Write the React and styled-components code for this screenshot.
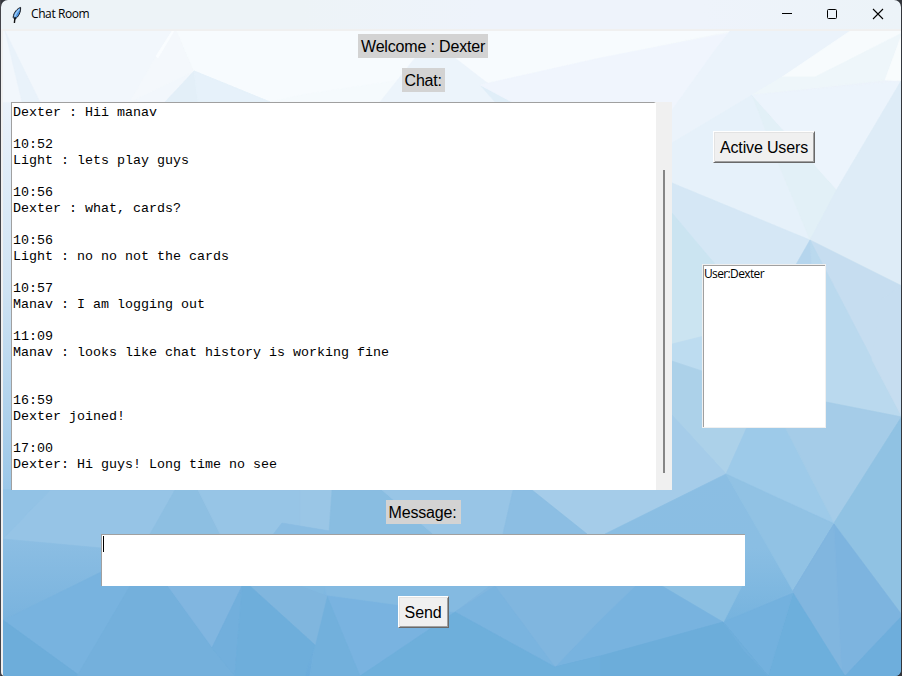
import React from 'react';
import styled, { createGlobalStyle } from 'styled-components';

const GlobalStyle = createGlobalStyle`
  * { box-sizing: border-box; }
  body { margin: 0; overflow: hidden; background: #303640; }
`;

const Window = styled.div`
  width: 902px;
  height: 676px;
  padding: 0 1px 0 1px;
  display: flex;
  flex-direction: column;
  background: linear-gradient(to right, #43444a 0 1px, #33363c 1px);
  color: #000;
`;

const TitleBar = styled.header`
  flex: 0 0 31px;
  display: flex;
  align-items: center;
  padding-left: 10px;
  border-radius: 7px 7px 0 0;
  border-bottom: 2px solid #f0f0f0;
  background: linear-gradient(to right, #edf3f7 0, #edf3f7 300px, #eef3fb 480px, #eef3fb 700px, #ecf3f8 100%);
`;

const Title = styled.h1`
  flex: 1;
  margin: 0;
  padding: 0 0 1px 8px;
  font: 400 12px/16px "Open Sans", "Noto Sans", sans-serif;
  letter-spacing: -0.4px;
`;

const WindowButton = styled.button`
  width: 46px;
  height: 28px;
  padding: 0 0 2px;
  border: 0;
  background: none;
  display: flex;
  align-items: center;
  justify-content: center;
`;

const Client = styled.main`
  position: relative;
  isolation: isolate;
  flex: 1;
  display: flex;
  flex-direction: column;
  padding-top: 3px;
  border-left: 2px solid #f0f0f0;
  border-radius: 0 0 6px 4px;
  overflow: hidden;
`;

const Backdrop = styled.svg`
  position: absolute;
  inset: 0;
  z-index: -1;
`;

const CenterStack = styled.section`
  width: 840px;
  display: flex;
  flex-direction: column;
  align-items: center;
  gap: 10px;
`;

const Caption = styled.label`
  width: ${(p) => p.$width}px;
  height: 24px;
  padding-left: 3px;
  background: #d3d3d3;
  font: 16px/25px "Liberation Sans", Arial, sans-serif;
  letter-spacing: -0.17px;
  white-space: pre;
`;

const MiddleRow = styled.section`
  display: flex;
  margin: 10px 0;
  padding-left: 8px;
`;

const ChatPane = styled.div`
  display: flex;
  width: 661px;
  height: 388px;
`;

const Transcript = styled.pre`
  flex: 1;
  margin: 0;
  padding: 2px 1px;
  overflow: hidden;
  background: #fff;
  border-top: 1px solid #a0a0a0;
  border-left: 1px solid #a0a0a0;
  border-right: 2px solid #fff;
  font: 13.333px/16px "Liberation Mono", "Courier New", monospace;
`;

const ScrollTrack = styled.div`
  width: 16px;
  padding: 68px 0 0 7px;
  background: #f0f0f0;
`;

const ScrollThumb = styled.div`
  width: 2px;
  height: 303px;
  background: #868686;
`;

const Sidebar = styled.aside`
  display: flex;
  flex-direction: column;
  align-items: center;
  width: 124px;
  margin-left: 30px;
  padding-top: 29px;
`;

const RaisedButton = styled.button`
  width: ${(p) => p.$width}px;
  height: 32px;
  padding: 1px 0 0;
  border: 1px solid;
  border-color: #fff #696969 #696969 #fff;
  box-shadow: inset 1px 1px #e3e3e3, inset -1px -1px #a0a0a0;
  background: #f0f0f0;
  color: #000;
  font: 16px/29px "Liberation Sans", Arial, sans-serif;
  letter-spacing: -0.15px;
`;

const UserList = styled.ul`
  width: 124px;
  height: 164px;
  margin: 101px 0 0;
  padding: 0;
  list-style: none;
  background: #fff;
  border: 1px solid #f0f0f0;
  box-shadow: inset 1px 1px #a0a0a0;
`;

const UserItem = styled.li`
  padding: 0 1px;
  font: 12px/17px "Open Sans", "Noto Sans", sans-serif;
  letter-spacing: -0.63px;
`;

const MessageBox = styled.div`
  width: 644px;
  height: 52px;
  padding: 1px;
  background: #fff;
  border-top: 1px solid #a0a0a0;
  border-left: 1px solid #a0a0a0;
`;

const Caret = styled.div`
  width: 1px;
  height: 16px;
  background: #000;
`;

const facets = [
  ['3,31 177,31 194,71 165,102 3,102', '#f2f7fc'],
  ['5,31 40,102 22,102', '#e9f2fa'],
  ['172,31 177,31 194,71 130,102 155,58', '#f4f8fc'],
  ['172,31 174,31 158,58 156,56', '#fafdff'],
  ['177,31 730,31 600,58 480,85 300,102 270,102 194,71', '#f7fbfe'],
  ['194,71 165,102 270,102', '#e3eff8'],
  ['194,71 198,102 270,102', '#e6f1fa'],
  ['270,102 300,95 400,80 480,85 512,102', '#f5fafd'],
  ['415,58 455,58 512,102 380,102', '#ecf4fb'],
  ['480,85 512,102 495,102', '#e0eef8'],
  ['480,85 600,58 730,33 720,45 672,143 640,102 512,102', '#f0f5fd'],
  ['730,31 852,31 782,77 752,96 672,143 672,110 715,50', '#ebf3fb'],
  ['850,31 902,31 902,33 815,77 782,77', '#f7fbfd'],
  ['902,33 885,80 752,95 782,77 815,77', '#eef6fa'],
  ['902,34 902,81 885,80', '#f8fcfd'],
  ['752,95 672,143 672,183 810,240 837,189', '#e6f1fa'],
  ['752,95 837,190 810,240 779,165', '#e2f0f7'],
  ['752,95 901,81 837,190', '#ecf4fc'],
  ['901,81 902,286 810,240 837,189', '#deecf7'],
  ['672,183 810,240 795,275 714,275 672,213', '#d5e7f5'],
  ['672,213 720,270 720,332 672,344', '#cbe4f1'],
  ['672,344 720,332 720,376 672,361', '#bddcf0'],
  ['810,240 826,272 826,300 790,275', '#b5d5ed'],
  ['810,240 902,286 902,417', '#c6ddf0'],
  ['810,240 902,417 820,401', '#bad9ee'],
  ['872,360 902,417 902,286 880,300', '#c6ddf0'],
  ['672,361 702,371 747,427 726,474 672,415', '#acd1e9'],
  ['672,415 726,474 605,534 587,534 532,490 672,480', '#a5cce9'],
  ['747,427 785,425 834,523 726,474', '#9dcae9'],
  ['785,427 800,400 826,402 902,417 834,523', '#a5cce8'],
  ['902,416 902,616 834,523', '#90c2e3'],
  ['726,474 605,534 605,586 662,586 723,622 793,591', 'url(#deep)'],
  ['726,474 834,524 793,591', '#91c2e4'],
  ['834,524 793,591 845,676 902,615', '#7db4df'],
  ['834,524 793,591 842,676', '#81b6df'],
  ['845,676 902,616 902,676', '#6eaedc'],
  ['793,593 845,676 768,676', '#6dafdc'],
  ['793,593 723,622 768,676', '#73b1de'],
  ['662,586 723,623 745,580', '#8bbfe2'],
  ['600,620 635,586 662,586 723,622 600,656 555,667', '#78b3df'],
  ['555,667 600,656 723,622 768,676 530,676', '#6cadda'],
  ['723,622 768,676 745,652', '#70afdc'],
  ['280,490 332,490 329,531 282,523', '#9ac6e6'],
  ['332,490 382,490 433,534 329,534', '#89bde1'],
  ['382,490 513,490 503,534 433,534', '#98c5e6'],
  ['513,490 532,490 587,534 503,534', '#8cbee3'],
  ['325,586 490,586 455,612 400,605 327,595', '#84bae1'],
  ['300,586 325,586 315,645 300,632', '#82b9e0'],
  ['327,596 400,606 448,625 360,676 310,676 315,645', '#79b3e0'],
  ['327,596 360,676 310,676 315,645', '#72b0dc'],
  ['490,586 635,586 600,620 555,667 455,612', '#80b6df'],
  ['495,586 555,667 455,612', '#7ab4df'],
  ['455,612 555,667 600,656 600,676 360,676', '#6eafdb'],
  ['3,490 175,490 150,540 101,548 3,539', '#96c4e6'],
  ['3,490 50,490 3,539', '#92c2e5'],
  ['175,490 198,490 220,534 150,534', '#8dbfe2'],
  ['198,490 300,490 300,526 282,523 273,534 220,534', '#97c5e6'],
  ['282,523 330,531 330,536 272,536', '#89bce2'],
  ['3,539 101,548 101,575 12,617 3,620', 'url(#left)'],
  ['101,572 130,586 80,676 3,620 20,612', '#78b3df'],
  ['3,620 80,676 3,676', '#6dadda'],
  ['130,586 168,586 212,648 235,676 77,676', '#74b0dc'],
  ['168,586 242,586 212,647', '#81b6e0'],
  ['242,586 212,648 235,676', '#72afdc'],
  ['250,586 300,586 327,596 315,645', '#80b6de'],
  ['242,586 250,586 315,645 305,676 235,676', '#6eaedb'],
];

function Polygons() {
  return (
    <Backdrop width="898" height="645" viewBox="3 31 898 645" aria-hidden="true">
      <defs>
        <linearGradient id="sky" x1="0" y1="0" x2="0" y2="1">
          <stop offset="0" stopColor="#f4f8fc" />
          <stop offset="0.12" stopColor="#e9f1fa" />
          <stop offset="0.4" stopColor="#cfe3f3" />
          <stop offset="0.71" stopColor="#9bc7e8" />
          <stop offset="1" stopColor="#6aabdb" />
        </linearGradient>
        <linearGradient id="deep" x1="0" y1="0" x2="0" y2="1">
          <stop offset="0" stopColor="#8bbee3" />
          <stop offset="0.5" stopColor="#8abee3" />
          <stop offset="1" stopColor="#76b3de" />
        </linearGradient>
        <linearGradient id="left" x1="0" y1="0" x2="0" y2="1">
          <stop offset="0" stopColor="#8cbee3" />
          <stop offset="1" stopColor="#79b3de" />
        </linearGradient>
      </defs>
      <rect x="3" y="31" width="898" height="645" fill="url(#sky)" />
      {facets.map(([points, fill]) => (
        <polygon key={points} points={points} fill={fill} stroke={fill} strokeWidth="0.6" />
      ))}
    </Backdrop>
  );
}

function Feather() {
  return (
    <svg width="12" height="18" viewBox="0 0 12 18" aria-hidden="true">
      <path d="M9.6 1.4C6.8 2.2 2.4 6.2 2.2 11.4l1.6 1.8C7.6 11 9.9 6 9.6 1.4Z" fill="#4b92e0" stroke="#17191e" strokeWidth="1" />
      <path d="M8.4 3.2C6 5.4 4.2 8 3.6 11" fill="none" stroke="#9ccbf5" strokeWidth="1.4" />
      <path d="M4.2 11C3.8 13 3.6 14 3.4 17" fill="none" stroke="#111" strokeWidth="1.4" />
    </svg>
  );
}

const log = `Dexter : Hii manav

10:52
Light : lets play guys

10:56
Dexter : what, cards?

10:56
Light : no no not the cards

10:57
Manav : I am logging out

11:09
Manav : looks like chat history is working fine


16:59
Dexter joined!

17:00
Dexter: Hi guys! Long time no see
`;

const users = ['User:Dexter'];

export default function App() {
  return (
    <>
      <GlobalStyle />
      <Window>
        <TitleBar>
          <Feather />
          <Title>Chat Room</Title>
          <WindowButton aria-label="Minimize">
            <svg width="12" height="12" viewBox="0 0 12 12"><path d="M2 5.5h10" stroke="#000" /></svg>
          </WindowButton>
          <WindowButton aria-label="Maximize">
            <svg width="12" height="12" viewBox="0 0 12 12"><rect x="1.5" y="1.5" width="9" height="9" rx="1" fill="none" stroke="#000" /></svg>
          </WindowButton>
          <WindowButton aria-label="Close">
            <svg width="12" height="12" viewBox="0 0 12 12"><path d="M1 1l10 10M11 1L1 11" stroke="#000" strokeWidth="1.1" /></svg>
          </WindowButton>
        </TitleBar>
        <Client>
          <Polygons />
          <CenterStack>
            <Caption $width={130}>Welcome : Dexter</Caption>
            <Caption $width={43}>Chat:</Caption>
          </CenterStack>
          <MiddleRow>
            <ChatPane>
              <Transcript>{log}</Transcript>
              <ScrollTrack><ScrollThumb /></ScrollTrack>
            </ChatPane>
            <Sidebar>
              <RaisedButton $width={102}>Active Users</RaisedButton>
              <UserList>
                {users.map((u) => <UserItem key={u}>{u}</UserItem>)}
              </UserList>
            </Sidebar>
          </MiddleRow>
          <CenterStack>
            <Caption $width={75}>Message:</Caption>
            <MessageBox><Caret /></MessageBox>
            <RaisedButton $width={51}>Send</RaisedButton>
          </CenterStack>
        </Client>
      </Window>
    </>
  );
}
